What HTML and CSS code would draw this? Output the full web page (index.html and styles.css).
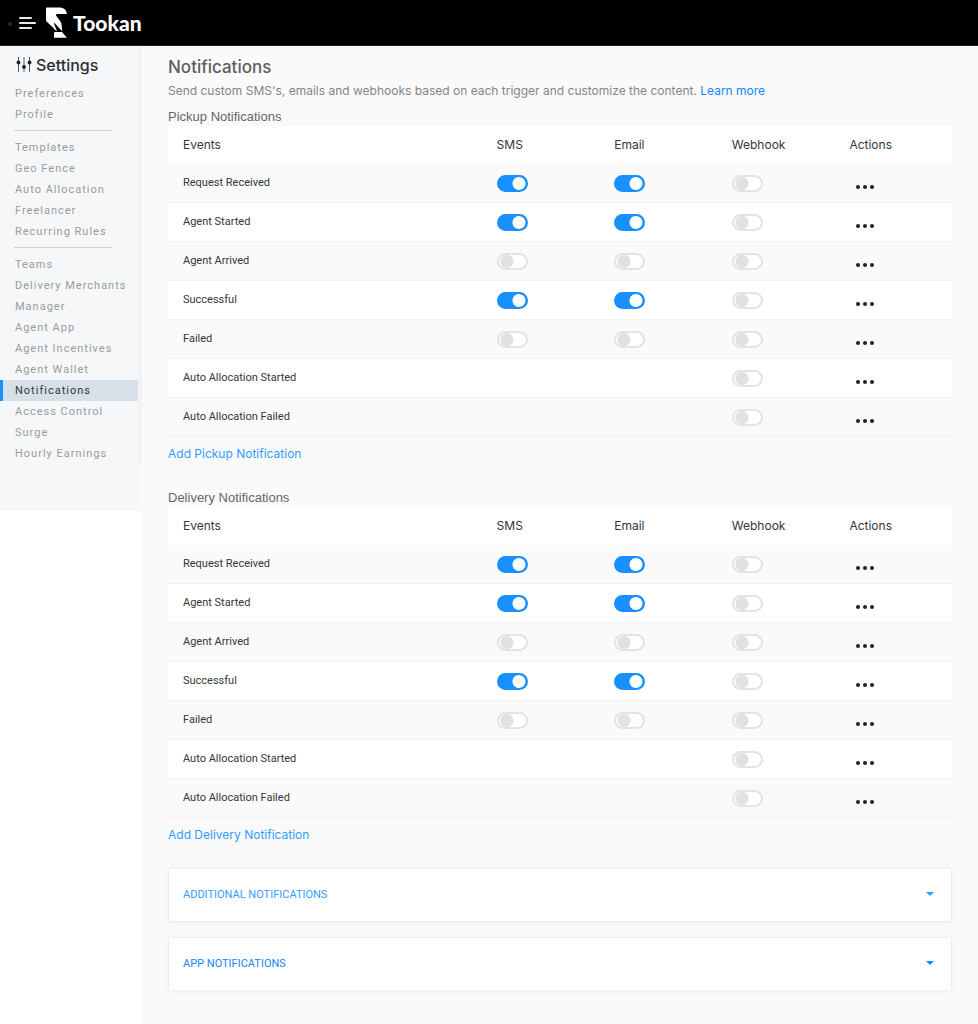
FILE: index.html
```html
<!DOCTYPE html>
<html lang="en">
<head>
<meta charset="utf-8">
<title>Tookan – Notifications</title>
<link rel="stylesheet" href="styles.css">
</head>
<body>
<header class="topbar">
  <span class="topbar-dot"></span>
  <button class="menu-button" type="button" aria-label="Menu">
    <svg width="18" height="14" viewBox="0 0 18 14"><path d="M2 2H13M2 7H17M2 12H13" stroke="#e9e9e6" stroke-width="2" stroke-linecap="round"/></svg>
  </button>
  <a class="brand" href="#">
    <svg class="brand-mark" width="22" height="32" viewBox="0 0 22 32" aria-hidden="true"><path fill="#fff" d="M0 1Q0 .5 .5 .5H14Q20 .5 21 7H11Q9.500 7 10 8.500L14.500 14.500Q16 17 16 24L8 15.500V21.500L0 14ZM8 16.500V22L11 24.500ZM9 25H16L21 30.800H8V26Q8 25 9 25Z"/></svg>
    <span class="brand-name">Tookan</span>
  </a>
</header>
<div class="shell">
  <nav class="sidebar" aria-label="Settings">
    <div class="sidebar-scroll">
      <h2 class="sidebar-title">
        <svg width="16" height="16" viewBox="0 0 16 16" aria-hidden="true"><path d="M2.500 0V15M8 0V15M13.500 0V15" stroke="#555b60" stroke-width="1"/><g fill="#22272b"><circle cx="2.500" cy="5.500" r="2"/><circle cx="8" cy="10" r="2"/><circle cx="13.500" cy="5.500" r="2"/></g></svg>
        Settings
      </h2>
      <ul class="nav-group">
        <li><a href="#">Preferences</a></li>
        <li><a href="#">Profile</a></li>
      </ul>
      <ul class="nav-group">
        <li><a href="#">Templates</a></li>
        <li><a href="#">Geo Fence</a></li>
        <li><a href="#">Auto Allocation</a></li>
        <li><a href="#">Freelancer</a></li>
        <li><a href="#">Recurring Rules</a></li>
      </ul>
      <ul class="nav-group">
        <li><a href="#">Teams</a></li>
        <li><a href="#">Delivery Merchants</a></li>
        <li><a href="#">Manager</a></li>
        <li><a href="#">Agent App</a></li>
        <li><a href="#">Agent Incentives</a></li>
        <li><a href="#">Agent Wallet</a></li>
        <li><a class="active" href="#" aria-current="page">Notifications</a></li>
        <li><a href="#">Access Control</a></li>
        <li><a href="#">Surge</a></li>
        <li><a href="#">Hourly Earnings</a></li>
      </ul>
    </div>
  </nav>
  <main class="content">
    <h1 class="page-title">Notifications</h1>
    <p class="intro">Send custom SMS's, emails and webhooks based on each trigger and customize the content. <a href="#">Learn more</a></p>
    <section class="block" data-kind="Pickup">
      <h3 class="block-title">Pickup Notifications</h3>
      <table class="events">
        <thead><tr><th class="col-event">Events</th><th>SMS</th><th>Email</th><th>Webhook</th><th class="col-actions">Actions</th></tr></thead>
        <tbody></tbody>
      </table>
      <a class="add-link" href="#">Add Pickup Notification</a>
    </section>
    <section class="block" data-kind="Delivery">
      <h3 class="block-title">Delivery Notifications</h3>
      <table class="events">
        <thead><tr><th class="col-event">Events</th><th>SMS</th><th>Email</th><th>Webhook</th><th class="col-actions">Actions</th></tr></thead>
        <tbody></tbody>
      </table>
      <a class="add-link" href="#">Add Delivery Notification</a>
    </section>
    <button class="panel" type="button" aria-expanded="false"><span>ADDITIONAL NOTIFICATIONS</span><span class="caret"></span></button>
    <button class="panel panel-app" type="button" aria-expanded="false"><span>APP NOTIFICATIONS</span><span class="caret"></span></button>
  </main>
</div>
<script src="app.js"></script>
</body>
</html>
```
FILE: styles.css
```css
* { box-sizing: border-box; }
body {
  margin: 0;
  min-height: 100vh;
  display: flex;
  flex-direction: column;
  background: #fff;
  color: #33373b;
  font-family: Roboto, "Open Sans", sans-serif;
}
a { color: inherit; text-decoration: none; }
button { border: 0; background: none; padding: 0; font: inherit; cursor: pointer; }
h1, h2, h3, p, ul { margin: 0; padding: 0; font-weight: 400; }
ul { list-style: none; }
svg { display: block; }

.topbar { display: flex; align-items: center; height: 46px; padding-left: 8px; background: #000; border-bottom: 1px solid #222; }
.topbar-dot { width: 4px; height: 4px; margin-top: 3px; border-radius: 50%; background: #222426; }
.menu-button { margin: 0 10px 0 6px; color: #fff; }
.brand { display: flex; align-items: center; gap: 5px; color: #fff; }
.brand-name { font: 900 21px/24px Lato, sans-serif; }

.shell { display: flex; flex: 1; align-items: stretch; }
.sidebar { width: 142px; flex: none; align-self: flex-start; padding-bottom: 47px; background: #f5f7f9; }
.sidebar-scroll { border-right: 4px solid #f3f3f4; }
.sidebar-title { display: flex; align-items: center; gap: 4px; padding: 7px 0 6px 16px; color: #2b2f33; font: 500 16px/24px Inter, sans-serif; }
.nav-group a { display: block; padding-left: 15px; color: #999c9e; font: 400 11px/21px Roboto, sans-serif; letter-spacing: 1px; }
.nav-group + .nav-group::before { content: ""; display: block; width: 98px; height: 1px; margin: 5px 0 6px 14px; background: #cfd2d4; }
.nav-group .active { padding-left: 12px; border-left: 3px solid #1890ff; background: #d7dfe8; color: #33373b; }

.content { flex: 1; min-width: 0; padding: 9px 26px 32px; background: #fafafa; }
.page-title { color: #5e5e5e; font: 500 17px/24px Inter, sans-serif; }
.intro { margin-top: 4px; color: #858585; font: 400 12px/16px Inter, sans-serif; }
.intro a { color: #1785fb; }
.block-title { padding-top: 9px; color: #666; font: 400 13px/18px "Liberation Sans", Arial, sans-serif; }
.block + .block { margin-top: 17px; }
.events { width: 100%; table-layout: fixed; border-collapse: separate; border-spacing: 0; }
.events th { width: 15%; height: 38px; padding: 0 0 0 15px; background: #fff; text-align: left; font: 400 12px/16px Inter, sans-serif; }
.events .col-event { width: 40%; }
.events td { height: 39px; padding: 0 0 0 15px; border-bottom: 1px solid #f1f1f1; font: 400 11px/16px Roboto, sans-serif; }
.events tbody tr:nth-child(even) { background: #fff; }
.switch { appearance: none; display: block; width: 31px; height: 17px; margin: 0; border: 2px solid #e2e3e4; border-radius: 9px; background: radial-gradient(circle at 8px 50%, #e0e1e3 6px, #fff 7px); }
.switch:checked { border-color: #1890ff; background: radial-gradient(circle at 20px 50%, #fff 6px, #1890ff 7px); }
.more { display: block; padding: 8px 0 0 7px; }
.add-link { display: block; width: fit-content; margin-top: 8px; color: #349cfb; font: 400 12px/18px Inter, sans-serif; }
.panel { display: flex; align-items: center; justify-content: space-between; width: 100%; height: 54px; margin-top: 24px; padding: 0 17px 0 14px; border: 1px solid #eee; border-radius: 2px; background: #fff; box-shadow: 0 1px 8px rgba(0, 0, 0, .04); color: #349cfb; font: 400 11px/16px Roboto, sans-serif; }
.panel-app { margin-top: 15px; color: #1785fb; }
.caret { margin-bottom: 3px; border: 4px solid transparent; border-top-color: currentColor; border-bottom: 0; }
```
FILE: app.js
```js
const events = [
  ["Request Received", true, true, false],
  ["Agent Started", true, true, false],
  ["Agent Arrived", false, false, false],
  ["Successful", true, true, false],
  ["Failed", false, false, false],
  ["Auto Allocation Started", null, null, false],
  ["Auto Allocation Failed", null, null, false]
];
const channels = ["SMS", "Email", "Webhook"];
const dots = '<svg width="18" height="4" viewBox="0 0 18 4"><g fill="#1f2225"><circle cx="2" cy="2" r="2"/><circle cx="9" cy="2" r="2"/><circle cx="16" cy="2" r="2"/></g></svg>';

document.querySelectorAll(".block").forEach(block => {
  block.querySelector("tbody").innerHTML = events.map(([name, ...states]) => {
    const cells = states.map((on, i) => on === null
      ? "<td></td>"
      : `<td><input class="switch" type="checkbox" role="switch" aria-label="${block.dataset.kind} ${name}: ${channels[i]}"${on ? " checked" : ""}></td>`).join("");
    return `<tr><td>${name}</td>${cells}<td><button class="more" type="button" aria-label="Actions for ${name}">${dots}</button></td></tr>`;
  }).join("");
});
```
